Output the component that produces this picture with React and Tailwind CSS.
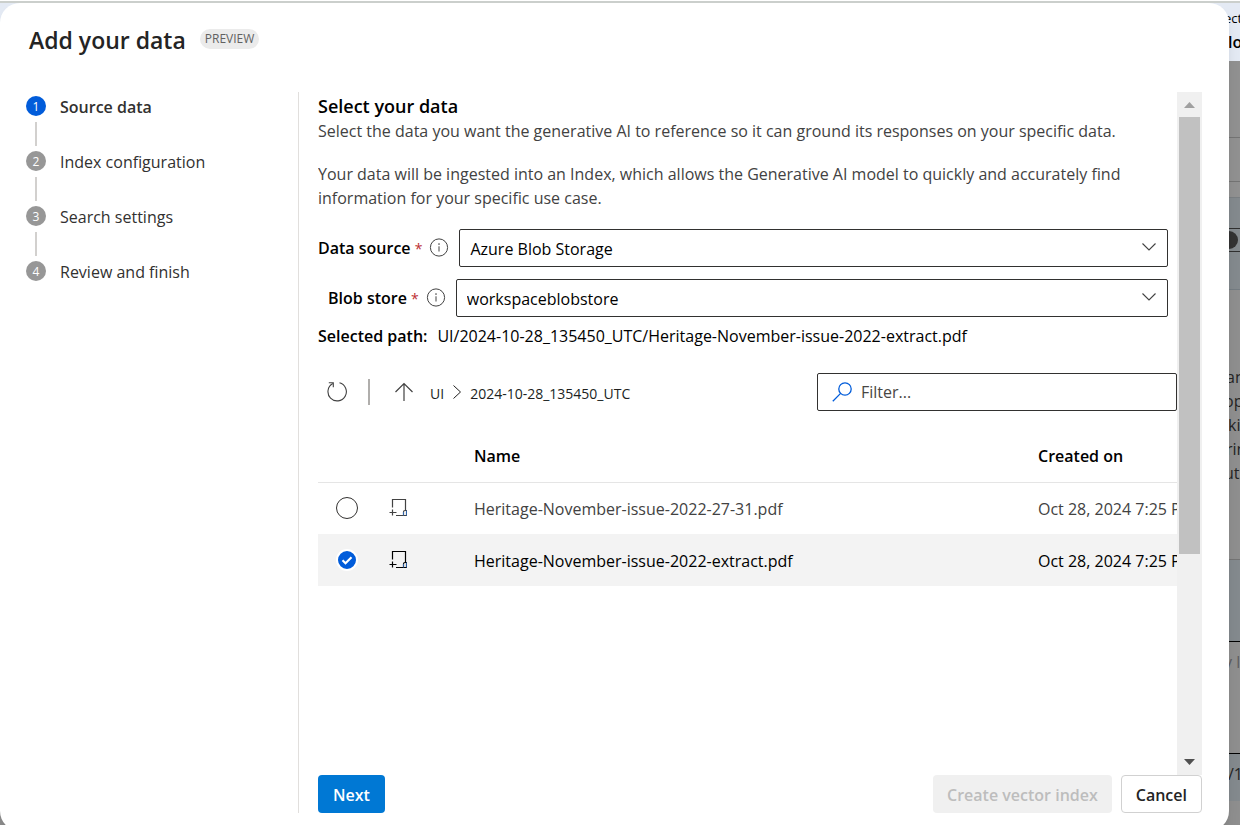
import React, { useState } from "react";

const STEPS = ["Source data", "Index configuration", "Search settings", "Review and finish"];

const FILES = [
  { name: "Heritage-November-issue-2022-27-31.pdf", createdOn: "Oct 28, 2024 7:25 PM" },
  { name: "Heritage-November-issue-2022-extract.pdf", createdOn: "Oct 28, 2024 7:25 PM" },
];

function InfoIcon() {
  return (
    <svg viewBox="0 0 20 20" className="h-5 w-5 shrink-0 text-[#424242]" fill="none" stroke="currentColor">
      <circle cx="10" cy="9.5" r="8.6" strokeWidth="1" />
      <path d="M10 8.3v5.2" strokeWidth="1" />
      <circle cx="10" cy="6.1" r="0.8" fill="currentColor" stroke="none" />
    </svg>
  );
}

function ChevronDown() {
  return (
    <svg
      viewBox="0 0 16 16"
      className="pointer-events-none absolute top-[9px] right-[11px] h-4 w-4 text-[#424242]"
      fill="none"
      stroke="currentColor"
      strokeWidth="1.1"
    >
      <path d="M1.5 5.5 8 12l6.5-6.5" />
    </svg>
  );
}

function FileIcon() {
  return (
    <svg viewBox="0 0 18 20" className="-ml-px h-5 w-[18px]" fill="none" stroke="currentColor" strokeWidth="1.2">
      <path d="M3.5 9.5v-8h13v11" />
      <path d="M.5 14.5h7M3.5 11.5v6" />
      <path d="M7 17.5h10.5v-5H16c-1 0-1.5.5-1.5 1.5v3.5" />
      <path d="M17.5 12.5v5M14.5 14v3.5" stroke="#2f6fc4" strokeWidth="0.8" />
    </svg>
  );
}

function Field({ id, label, value, className }) {
  return (
    <div className={`flex items-center ${className}`}>
      <label htmlFor={id} className="shrink-0 font-semibold text-black">
        {label} <span className="text-sm font-normal text-[#bc2f32]">*</span>
      </label>
      <span className="mr-2.5 ml-[7px]">
        <InfoIcon />
      </span>
      <div className="relative min-w-0 flex-1">
        <select
          id={id}
          defaultValue={value}
          className="h-[38px] w-full appearance-none rounded-xs border border-[#323130] bg-white px-2.5 pt-0.5 text-black outline-none"
        >
          <option>{value}</option>
        </select>
        <ChevronDown />
      </div>
    </div>
  );
}

function Stepper() {
  return (
    <ol className="w-[272px] shrink-0 text-[#323130]">
      {STEPS.map((step, i) => (
        <li key={step} className="flex h-[55px] gap-3.5">
          <div className="flex w-5 flex-col items-center pt-1">
            <span
              className={`flex h-5 w-5 shrink-0 items-center justify-center rounded-full pt-px text-xs text-white ${
                i === 0 ? "bg-[#015cda]" : "bg-[#979797]"
              }`}
            >
              {i + 1}
            </span>
            {i < STEPS.length - 1 && <span className="mt-1.5 h-6 w-0.5 bg-[#d2d0ce]" />}
          </div>
          <span className={`pt-[3px] leading-6 ${i === 0 ? "font-semibold" : ""}`}>{step}</span>
        </li>
      ))}
    </ol>
  );
}

function Toolbar() {
  return (
    <div className="mt-[25px] flex items-center">
      <button type="button" aria-label="Refresh" className="ml-2 text-[#424242]">
        <svg viewBox="0 0 22 22" className="h-[22px] w-[22px]" fill="none" stroke="currentColor" strokeWidth="1.1">
          <path d="M13.5 1.8A9.2 9.2 0 1 1 6.8 2.6" />
          <path d="M2.8 1.7h4.5v4.6" />
        </svg>
      </button>
      <span className="mx-5 h-[26px] w-0.5 bg-[#b0aeac]" />
      <button type="button" aria-label="Up one level" className="ml-1 text-[#424242]">
        <svg viewBox="0 0 20 20" className="h-5 w-5" fill="none" stroke="currentColor" strokeWidth="1.2">
          <path d="M10 19V1.5M1.5 10 10 1.5l8.5 8.5" />
        </svg>
      </button>
      <nav className="ml-4 flex items-center gap-2 text-sm text-[#201f1e]">
        <a href="#ui" className="pt-1">
          UI
        </a>
        <svg viewBox="0 0 10 16" className="h-4 w-2.5" fill="none" stroke="currentColor" strokeWidth="1">
          <path d="m1.5 1.5 7 6.5-7 6.5" />
        </svg>
        <a href="#folder" className="pt-1">
          2024-10-28_135450_UTC
        </a>
      </nav>
      <label className="ml-auto flex h-[38px] w-[360px] items-center gap-[9px] rounded-xs border border-[#323130] px-3.5">
        <svg viewBox="0 0 20 20" className="h-5 w-5 text-[#015cda]" fill="none" stroke="currentColor" strokeWidth="1.3">
          <circle cx="13" cy="7" r="6.2" />
          <path d="M8.6 11.4.8 19.2" />
        </svg>
        <input
          type="text"
          aria-label="Filter"
          placeholder="Filter..."
          className="min-w-0 flex-1 outline-none placeholder:text-[#484644]"
        />
      </label>
    </div>
  );
}

function FileTable() {
  const [selected, setSelected] = useState(1);

  return (
    <table className="mt-[17px] w-full table-fixed text-left">
      <colgroup>
        <col className="w-[72px]" />
        <col className="w-[84px]" />
        <col />
        <col className="w-[139px]" />
      </colgroup>
      <thead>
        <tr className="h-[54px] border-b border-[#e5e5e5] text-black">
          <th aria-label="Selected" />
          <th aria-label="Type" />
          <th className="pt-0.5 font-semibold">Name</th>
          <th className="pt-0.5 font-semibold">Created on</th>
        </tr>
      </thead>
      <tbody>
        {FILES.map((file, i) => (
          <tr
            key={file.name}
            className={`h-[52px] ${i === selected ? "bg-[#f3f3f3] text-black" : "text-[#424242]"}`}
          >
            <td className="pl-[18px]">
              <label className="relative flex h-[22px] w-[22px] items-center justify-center">
                <input
                  type="radio"
                  name="file"
                  aria-label={file.name}
                  checked={i === selected}
                  onChange={() => setSelected(i)}
                  className="h-[22px] w-[22px] appearance-none rounded-full border border-[#323130] bg-white checked:border-2 checked:border-white checked:bg-[#015cda]"
                />
                {i === selected && (
                  <svg viewBox="0 0 12 12" className="pointer-events-none absolute h-3 w-3" fill="none" stroke="white" strokeWidth="2.2">
                    <path d="m1.5 6.3 3 3 6-6" />
                  </svg>
                )}
              </label>
            </td>
            <td>
              <FileIcon />
            </td>
            <td className="truncate pt-0.5">{file.name}</td>
            <td className="overflow-hidden pt-0.5 whitespace-nowrap">{file.createdOn}</td>
          </tr>
        ))}
      </tbody>
    </table>
  );
}

function Scrollbar() {
  return (
    <div className="flex w-[25px] shrink-0 flex-col items-center bg-[#f0f0f0]">
      <svg viewBox="0 0 25 25" className="h-[25px] w-[25px] shrink-0">
        <path d="M12.5 10 18 16H7z" fill="#a0a0a0" />
      </svg>
      <div className="h-[64%] w-[21px] bg-[#c1c1c1]" />
      <svg viewBox="0 0 25 25" className="mt-auto h-[25px] w-[25px] shrink-0">
        <path d="M12.5 15 18 9H7z" fill="#505050" />
      </svg>
    </div>
  );
}

// Page left visible, dimmed, around the dialog
function Backdrop() {
  return (
    <div className="flex h-full flex-col items-end overflow-hidden whitespace-nowrap text-[#252525]">
      <div className="h-[3px] w-full shrink-0 border-b-2 border-[#cbcfcc] bg-white" />
      <div className="flex h-[58px] w-full shrink-0 flex-col items-end bg-[#e4eaf4] pt-1.5 text-black">
        <span className="w-4 overflow-hidden text-[13px] leading-[18px]">ect</span>
        <span className="mt-[3px] w-3 overflow-hidden leading-6 font-semibold">log</span>
      </div>
      <div className="h-[77px] w-full shrink-0 border-b border-[#747474] bg-[#919191]" />
      <div className="h-11 w-full shrink-0 border-b border-[#747474] bg-[#919191]" />
      <div className="h-4 w-full shrink-0 border-b border-[#7a7f83] bg-[#919191]" />
      <div className="h-[30px] w-full shrink-0 bg-[#848a8e]" />
      <div className="flex h-6 w-full shrink-0 items-center justify-end border-y border-[#303030] bg-[#848a8e]">
        <span className="mr-0.5 h-[18px] w-[18px] rounded-full bg-[#333333]" />
      </div>
      <div className="h-[38px] w-full shrink-0 border-b border-[#747c82] bg-[#848a8e]" />
      <div className="flex h-[270px] w-full shrink-0 flex-col items-end border-b border-[#747474] bg-[#8f8f8f] pt-[75px] leading-6">
        <span className="w-3.5 overflow-hidden">and</span>
        <span className="w-4 overflow-hidden">ope</span>
        <span className="w-3 overflow-hidden">kin</span>
        <span className="w-3.5 overflow-hidden">rin</span>
        <span className="w-4 overflow-hidden">uts</span>
      </div>
      <div className="h-[82px] w-full shrink-0 border-b border-black bg-[#848a8e]" />
      <div className="flex h-28 w-full shrink-0 justify-end border-b border-black bg-[#8f8f8f] pt-2 text-[#5c5c60]">
        <span className="w-4 overflow-hidden">v l</span>
      </div>
      <div className="flex h-[47px] w-full shrink-0 justify-end bg-[#848a8e] pt-2">
        <span className="w-3 overflow-hidden">/16</span>
      </div>
      <div className="w-full flex-1 bg-[#8f8f8f]" />
    </div>
  );
}

export default function App() {
  return (
    <div className="relative h-screen overflow-hidden font-['Open_Sans',sans-serif] text-base">
      <Backdrop />
      <div
        role="dialog"
        aria-labelledby="dialog-title"
        className="absolute top-[3px] right-[11px] -bottom-1.5 left-0 flex flex-col rounded-[20px] bg-white pr-[27px] pb-[18px] pl-[26px] shadow-lg"
      >
        <header className="flex h-[89px] shrink-0 items-start gap-3.5 pt-[21px] pl-[3px]">
          <h1 id="dialog-title" className="text-[23px] leading-8 font-semibold text-[#242424]">
            Add your data
          </h1>
          <span className="mt-[5px] flex h-5 items-center rounded-full bg-[#ebebeb] px-[5px] text-xs font-medium text-[#616161]">
            PREVIEW
          </span>
        </header>

        <div className="flex min-h-0 flex-1">
          <Stepper />
          <div className="flex min-w-0 flex-1 flex-col border-l border-[#e1dfdd] pl-[19px]">
            <div className="flex min-h-0 flex-1">
              <section className="min-w-0 flex-1 overflow-hidden">
                <h2 className="mb-px pt-0.5 text-lg leading-6 font-semibold text-black">Select your data</h2>
                <div className="leading-6 text-[#424242]">
                  <p>Select the data you want the generative AI to reference so it can ground its responses on your specific data.</p>
                  <p className="mt-[19px]">
                    Your data will be ingested into an Index, which allows the Generative AI model to quickly and accurately find
                    information for your specific use case.
                  </p>
                </div>
                <Field id="data-source" label="Data source" value="Azure Blob Storage" className="mt-[19px] mr-[9px]" />
                <Field id="blob-store" label="Blob store" value="workspaceblobstore" className="mt-3 mr-[9px] pl-2.5" />
                <p className="mt-[7px] flex gap-2.5 leading-6 text-black">
                  <span className="font-semibold">Selected path:</span>
                  <span>UI/2024-10-28_135450_UTC/Heritage-November-issue-2022-extract.pdf</span>
                </p>
                <Toolbar />
                <FileTable />
              </section>
              <Scrollbar />
            </div>
            <footer className="flex h-[38px] shrink-0 items-stretch gap-[9px] font-semibold">
              <button type="button" className="mr-auto rounded-sm bg-[#0078d4] px-[15px] pt-0.5 text-white">
                Next
              </button>
              <button type="button" disabled className="rounded-sm bg-[#f0f0f0] px-3.5 pt-0.5 text-[#bdbdbd]">
                Create vector index
              </button>
              <button type="button" className="rounded-sm border border-[#d1d1d1] bg-white px-3.5 pt-0.5 text-[#242424]">
                Cancel
              </button>
            </footer>
          </div>
        </div>
      </div>
    </div>
  );
}
